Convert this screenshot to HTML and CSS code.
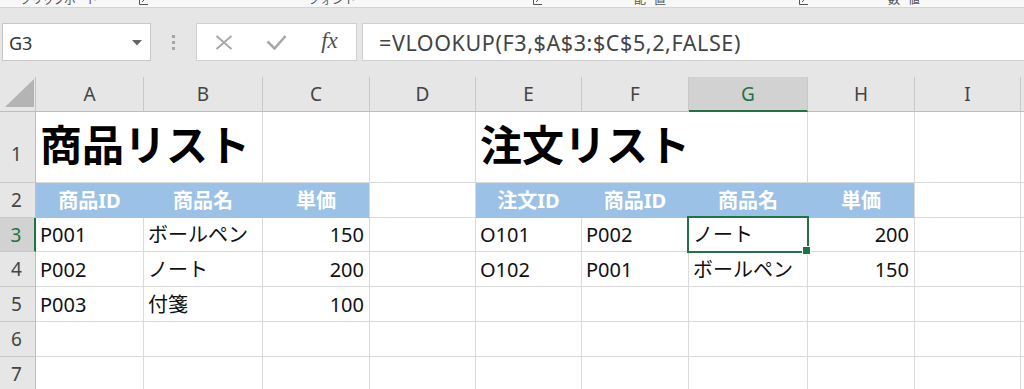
FILE: index.html
```html
<!DOCTYPE html>
<html lang="ja">
<head>
<meta charset="utf-8">
<title>VLOOKUP</title>
<link rel="stylesheet" href="styles.css">
</head>
<body>
<div class="app">
  <div class="ribbon-edge">
    <span class="lbl l1">クリップボード</span>
    <svg class="launch k1" width="9" height="9" viewBox="0 0 9 9"><path d="M0.5 0v8.5h8.5M3 6l5-5" fill="none" stroke="#555" stroke-width="1"/></svg>
    <span class="lbl l2">フォント</span>
    <svg class="launch k2" width="9" height="9" viewBox="0 0 9 9"><path d="M0.5 0v8.5h8.5M3 6l5-5" fill="none" stroke="#555" stroke-width="1"/></svg>
    <span class="lbl l3">配置</span>
    <svg class="launch k3" width="9" height="9" viewBox="0 0 9 9"><path d="M0.5 0v8.5h8.5M3 6l5-5" fill="none" stroke="#555" stroke-width="1"/></svg>
    <span class="lbl l4">数値</span>
  </div>

  <div class="fbar">
    <div class="namebox">
      <span class="ref">G3</span>
      <svg width="10" height="6" viewBox="0 0 10 6"><path d="M0 0h10L5 5.5z" fill="#666"/></svg>
    </div>
    <div class="grip"><i></i><i></i><i></i></div>
    <div class="fnbox">
      <div class="slot">
        <svg width="18" height="15" viewBox="0 0 18 15"><path d="M1.5 1l15 13M16.5 1l-15 13" stroke="#a8a8a8" stroke-width="2" fill="none"/></svg>
      </div>
      <div class="slot">
        <svg width="21" height="15" viewBox="0 0 21 15"><path d="M1.5 6.5l7 7 11-12.5" stroke="#a8a8a8" stroke-width="2.6" fill="none"/></svg>
      </div>
      <div class="slot"><span class="fx">fx</span></div>
    </div>
    <div class="formula">=VLOOKUP(F3,$A$3:$C$5,2,FALSE)</div>
  </div>

  <div class="sheet">
    <!-- column headers -->
    <div class="c corner"><svg width="30" height="30" viewBox="0 0 30 30"><path d="M29 0v28H0z" fill="#b4b4b4"/></svg></div>
    <div class="c ch">A</div>
    <div class="c ch">B</div>
    <div class="c ch">C</div>
    <div class="c ch">D</div>
    <div class="c ch">E</div>
    <div class="c ch">F</div>
    <div class="c ch on">G</div>
    <div class="c ch">H</div>
    <div class="c ch">I</div>
    <div class="c ch"></div>

    <!-- row 1 -->
    <div class="c rh tall">1</div>
    <div class="c title span2">商品リスト</div>
    <div class="c"></div>
    <div class="c"></div>
    <div class="c title span3">注文リスト</div>
    <div class="c"></div>
    <div class="c"></div>
    <div class="c"></div>

    <!-- row 2 -->
    <div class="c rh">2</div>
    <div class="c hd">商品ID</div>
    <div class="c hd">商品名</div>
    <div class="c hd end">単価</div>
    <div class="c"></div>
    <div class="c hd">注文ID</div>
    <div class="c hd">商品ID</div>
    <div class="c hd">商品名</div>
    <div class="c hd end">単価</div>
    <div class="c"></div>
    <div class="c"></div>

    <!-- row 3 -->
    <div class="c rh on">3</div>
    <div class="c">P001</div>
    <div class="c">ボールペン</div>
    <div class="c num">150</div>
    <div class="c"></div>
    <div class="c">O101</div>
    <div class="c">P002</div>
    <div class="c sel">ノート</div>
    <div class="c num">200</div>
    <div class="c"></div>
    <div class="c"></div>

    <!-- row 4 -->
    <div class="c rh">4</div>
    <div class="c">P002</div>
    <div class="c">ノート</div>
    <div class="c num">200</div>
    <div class="c"></div>
    <div class="c">O102</div>
    <div class="c">P001</div>
    <div class="c">ボールペン</div>
    <div class="c num">150</div>
    <div class="c"></div>
    <div class="c"></div>

    <!-- row 5 -->
    <div class="c rh">5</div>
    <div class="c">P003</div>
    <div class="c">付箋</div>
    <div class="c num">100</div>
    <div class="c"></div>
    <div class="c"></div>
    <div class="c"></div>
    <div class="c"></div>
    <div class="c"></div>
    <div class="c"></div>
    <div class="c"></div>

    <!-- row 6 -->
    <div class="c rh">6</div>
    <div class="c"></div><div class="c"></div><div class="c"></div><div class="c"></div><div class="c"></div>
    <div class="c"></div><div class="c"></div><div class="c"></div><div class="c"></div><div class="c"></div>

    <!-- row 7 -->
    <div class="c rh">7</div>
    <div class="c"></div><div class="c"></div><div class="c"></div><div class="c"></div><div class="c"></div>
    <div class="c"></div><div class="c"></div><div class="c"></div><div class="c"></div><div class="c"></div>
  </div>
</div>
</body>
</html>
```

FILE: styles.css
```css
* { box-sizing: border-box; }

html, body {
  margin: 0;
  padding: 0;
}

body {
  width: 1024px;
  height: 389px;
  overflow: hidden;
  background: #e6e6e6;
  font-family: "Noto Sans", "Noto Sans CJK JP", sans-serif;
}

.app {
  width: 1024px;
  height: 389px;
  overflow: hidden;
}

/* ---- bottom edge of the ribbon ---- */
.ribbon-edge {
  height: 8px;
  background: #f8f8f8;
  border-bottom: 1px solid #d4d4d4;
  overflow: hidden;
  display: flex;
  align-items: flex-start;
}

.lbl {
  font-family: "Noto Sans CJK JP", sans-serif;
  font-size: 12px;
  line-height: 12px;
  margin-top: -7px;
  color: #555;
  white-space: nowrap;
}

.launch { margin-top: -4px; flex: none; }

.l1 { margin-left: 20px; letter-spacing: -1px; }
.k1 { margin-left: 42px; }
.l2 { margin-left: 160px; }
.k2 { margin-left: 177px; }
.l3 { margin-left: 92px; letter-spacing: 8px; }
.k3 { margin-left: 125px; }
.l4 { margin-left: 80px; letter-spacing: 8px; }

/* ---- formula bar ---- */
.fbar {
  display: flex;
  height: 38px;
  margin: 15px 0 16px;
}

.namebox {
  margin-left: 2px;
  width: 149px;
  flex: none;
  background: #fff;
  border: 1px solid #c8c8c8;
  display: flex;
  align-items: center;
  justify-content: space-between;
  padding: 2px 8px 0 6px;
}

.ref {
  font-size: 18px;
  color: #333;
}

.grip {
  width: 45px;
  flex: none;
  display: flex;
  flex-direction: column;
  align-items: center;
  justify-content: center;
  gap: 3px;
}

.grip i {
  display: block;
  width: 3px;
  height: 3px;
  background: #a6a6a6;
}

.fnbox {
  width: 161px;
  flex: none;
  background: #fff;
  border: 1px solid #d0d0d0;
  display: flex;
}

.slot {
  flex: 1;
  display: flex;
  align-items: center;
  justify-content: center;
}

.fx {
  font-family: "Liberation Serif", serif;
  font-style: italic;
  font-size: 23px;
  color: #505050;
  margin-top: -2px;
}

.formula {
  flex: 1;
  margin-left: 5px;
  background: #fff;
  border: 1px solid #d0d0d0;
  border-right: none;
  display: flex;
  align-items: center;
  padding: 0 0 0 16px;
  font-size: 21.5px;
  letter-spacing: 0.6px;
  color: #444;
  white-space: nowrap;
}

/* ---- sheet grid ---- */
.sheet {
  display: grid;
  grid-template-columns: 36px 108px 119px 107px 106px 106px 107px 119px 107px 106px 1fr;
  grid-template-rows: 35px 71px 35px 34px 35px 35px 35px 35px;
  background: #fff;
}

.c {
  min-width: 0;
  border-right: 1px solid #dadada;
  border-bottom: 1px solid #dadada;
  display: flex;
  align-items: flex-end;
  padding: 0 4px 6px;
  font-size: 20px;
  line-height: 20px;
  color: #111;
  white-space: nowrap;
}

.corner {
  background: #e6e6e6;
  border-right-color: #c4c4c4;
  border-bottom-color: #bdbdbd;
  padding: 0 0 2px 5px;
  align-items: flex-end;
}

.ch {
  background: #e6e6e6;
  border-right-color: #c8c8c8;
  border-bottom-color: #bdbdbd;
  justify-content: center;
  align-items: center;
  padding: 0;
  font-size: 19px;
  color: #444;
}

.ch.on {
  background: #d2d2d2;
  color: #217346;
  border-bottom: 2px solid #217346;
}

.rh {
  background: #e6e6e6;
  border-right-color: #bdbdbd;
  border-bottom-color: #c8c8c8;
  justify-content: center;
  align-items: center;
  padding: 0 2px 0 0;
  font-size: 19px;
  color: #444;
}

.rh.tall { padding-top: 14px; }

.rh.on {
  background: #d2d2d2;
  color: #217346;
  border-right: 2px solid #217346;
}

.title {
  font-family: "Noto Sans CJK JP", sans-serif;
  font-size: 42px;
  line-height: 42px;
  font-weight: 700;
  color: #000;
  padding-bottom: 18px;
}

.span2 { grid-column: span 2; }
.span3 { grid-column: span 3; }

.hd {
  background: #9bc2e6;
  color: #fff;
  font-weight: 700;
  justify-content: center;
  border-right-color: #9bc2e6;
  border-bottom-color: #9bc2e6;
}

.hd.end { border-right-color: #dadada; }

.num {
  justify-content: flex-end;
  padding-right: 5px;
}

.sel { position: relative; }

.sel::after {
  content: "";
  position: absolute;
  left: -2px;
  top: -2px;
  right: -2px;
  bottom: -2px;
  border: 2px solid #217346;
}

.sel::before {
  content: "";
  position: absolute;
  right: -4px;
  bottom: -4px;
  width: 7px;
  height: 7px;
  background: #217346;
  border: 1px solid #fff;
  z-index: 2;
}
```
